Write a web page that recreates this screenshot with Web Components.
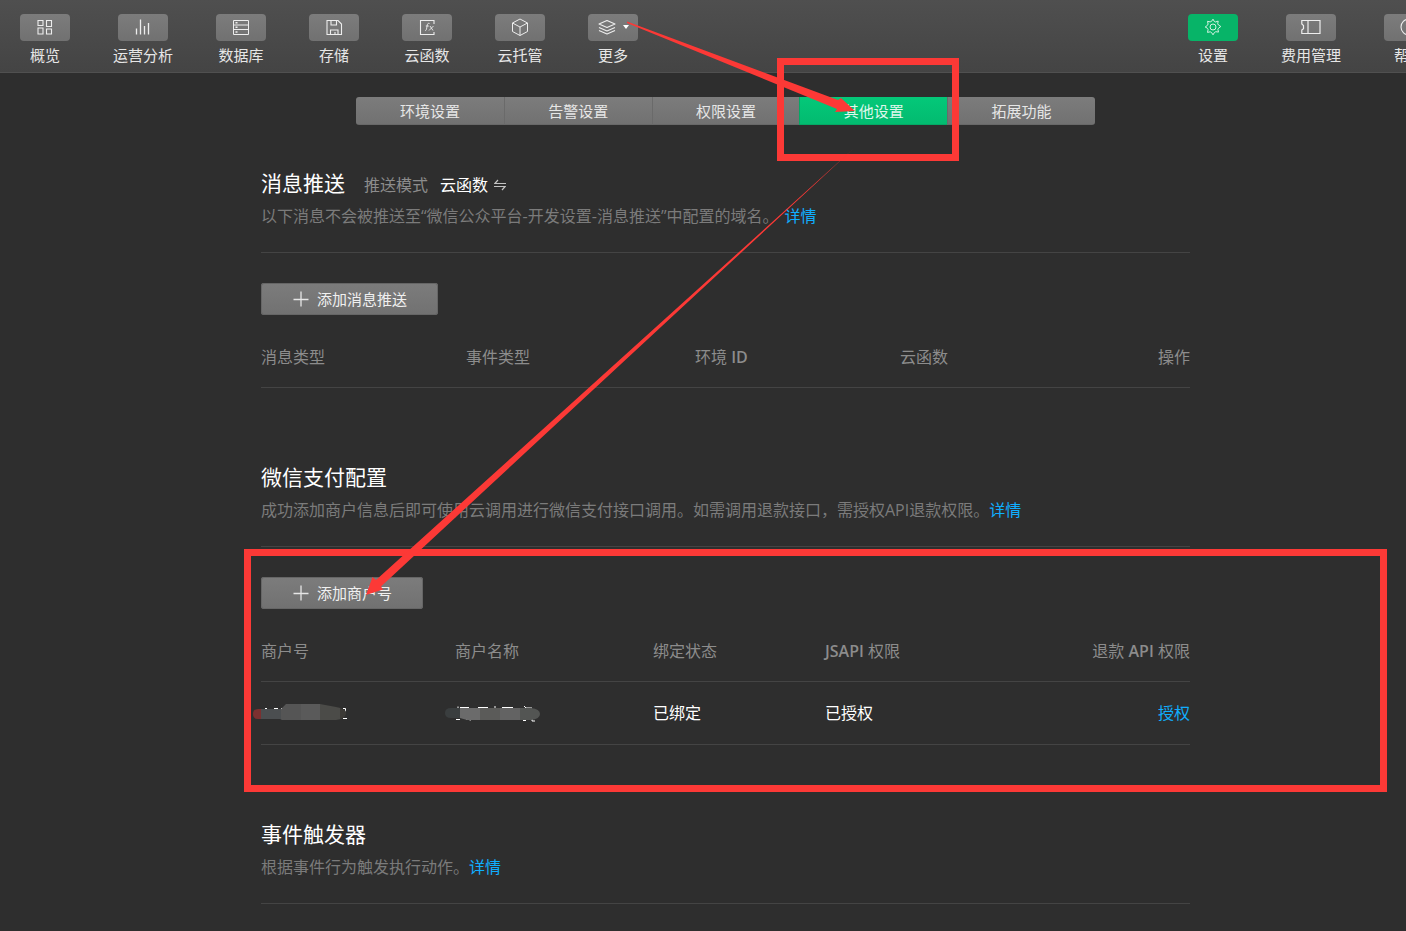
<!DOCTYPE html>
<html lang="zh-CN">
<head>
<meta charset="utf-8">
<title>云开发控制台</title>
<style>
  html, body { margin: 0; background: #2e2e2e; }
  body {
    min-height: 100vh;
    overflow: hidden;
    color: #fff;
    font-family: "Open Sans", "Noto Sans CJK SC", sans-serif;
    font-size: 16px;
    line-height: 24px;
  }
</style>
</head>
<body>
<cloud-console>
  <tool-bar slot="toolbar">
    <tool-item label="概览">
      <svg width="18" height="18" viewBox="0 0 18 18" fill="none" stroke="#ededed" stroke-width="1.1"><path d="M2 2.5h5v5H2zM10.500 2.500h5v6h-5zM2 10h5v6H2zM10.500 11h5v5h-5z"/></svg>
    </tool-item>
    <tool-item label="运营分析">
      <svg width="18" height="18" viewBox="0 0 18 18" fill="none" stroke="#ededed" stroke-width="1.3"><path d="M2.500 10.500v6M6.500 1.500v15M10.500 8v8.500M14.500 5v11.500"/></svg>
    </tool-item>
    <tool-item label="数据库">
      <svg width="18" height="18" viewBox="0 0 18 18" fill="none" stroke="#ededed"><path d="M1.500 2.500h15v14h-15z"/><path d="M1.500 7h15M1.500 11.500h15"/><path d="M3.500 4.700h2M3.500 9.300h2M3.500 14h2" stroke-width="1.4"/></svg>
    </tool-item>
    <tool-item label="存储">
      <svg width="18" height="18" viewBox="0 0 18 18" fill="none" stroke="#ededed" stroke-width="1.1"><path d="M2 2.500h11l3.500 3.500v10.500H2z"/><path d="M6 2.500v4.500h5.500V2.500M5.500 16.500v-4.500h7.500v4.500M10 14v2.500"/></svg>
    </tool-item>
    <tool-item label="云函数">
      <svg width="18" height="18" viewBox="0 0 18 18" fill="none" stroke="#ededed"><path d="M16 6V2.500H2.500v14H16V14" stroke-width="1.1"/><path d="M11.500 5.500c-1.500-.5-2 .3-2.200 1.500L8.500 11c-.2 1.200-.6 1.600-1.300 1.500M7.800 8h3M12 8l3 4.500M15.500 8l-4.500 4.500" stroke-width=".9"/></svg>
    </tool-item>
    <tool-item label="云托管">
      <svg width="18" height="18" viewBox="0 0 18 18" fill="none" stroke="#ededed" stroke-linejoin="round"><path d="M9 1l7.500 4v8.500L9 17.500l-7.500-4V5zM1.500 5L9 9l7.500-4M9 9v8.500"/></svg>
    </tool-item>
    <tool-item label="更多" menu>
      <svg width="18" height="18" viewBox="0 0 18 18" fill="none" stroke="#ededed" stroke-width="1.100" stroke-linejoin="round"><path d="M9 2.500l8 3.500-8 3.500L1 6zM1 9.500l8 3.500 8-3.500M1 12.500l8 3.500 8-3.500"/></svg>
    </tool-item>
    <tool-item slot="end" label="设置" active>
      <svg width="18" height="18" viewBox="0 0 18 18" fill="none" stroke="#d5f3e3" stroke-linejoin="round"><circle cx="9" cy="9" r="3"/><path d="M9 1.200l1.300 2.300 1.200.5 2.700-.9-.5 2.700.8 1.200 2.300 1.500-2.300 1.700-.6 1.200.6 2.700-2.700-.4-1.300.7L9 16.800l-1.500-2.300-1.300-.7-2.700.6.6-2.800-.6-1.300L1.200 9l2.300-1.700.6-1.300-.6-2.700 2.700.6 1.300-.5z"/></svg>
    </tool-item>
    <tool-item slot="end" label="费用管理">
      <svg width="20" height="18" viewBox="0 0 20 18" fill="none" stroke="#ededed" stroke-width="1.200"><path d="M.800 2.500h18.200v13H.800V12l1.700-1.200V7.500L.800 6zM7 2.500v13"/></svg>
    </tool-item>
    <tool-item slot="end" label="帮助">
      <svg width="18" height="18" viewBox="0 0 18 18" fill="none" stroke="#ededed" stroke-width="1.100"><circle cx="9" cy="9" r="8"/><path d="M6.500 7c0-3.200 5-3.200 5 0 0 2-2.500 1.800-2.500 4M9 12.500V14"/></svg>
    </tool-item>
  </tool-bar>

  <tab-strip slot="tabs" tabs="环境设置,告警设置,权限设置,其他设置,拓展功能" selected="3"></tab-strip>

  <config-section>
    <span slot="title">消息推送</span>
    <push-mode slot="extra"></push-mode>
    以下消息不会被推送至“微信公众平台-开发设置-消息推送”中配置的域名。<text-link gap>详情</text-link>
    <add-button slot="body">添加消息推送</add-button>
    <message-table slot="body"></message-table>
  </config-section>

  <config-section>
    <span slot="title">微信支付配置</span>
    成功添加商户信息后即可使用云调用进行微信支付接口调用。如需调用退款接口，需授权API退款权限。<text-link>详情</text-link>
    <add-button slot="body">添加商户号</add-button>
    <merchant-table slot="body"></merchant-table>
  </config-section>

  <config-section>
    <span slot="title">事件触发器</span>
    根据事件行为触发执行动作。<text-link>详情</text-link>
  </config-section>

  <guide-marks slot="marks"></guide-marks>
</cloud-console>

<script>
  const define = (name, render) => customElements.define(name, class extends HTMLElement {
    connectedCallback() {
      if (this.shadowRoot) return;
      this.attachShadow({ mode: 'open' }).innerHTML = render(this);
    }
  });

  const buttonReset = `
    button { box-sizing: border-box; margin: 0; padding: 0; border: 0; font: inherit; color: #e6e6e6; cursor: pointer;
             background: linear-gradient(#7c7c7c, #717171); }`;

  // The console is a little wider than the window, so its right edge runs out of view.
  define('cloud-console', () => `
    <style>
      :host { display: block; position: relative; width: calc(100% + 45px); }
      main { display: flex; flex-direction: column; gap: 76px; max-width: 929px; margin: 44px auto 0; padding-bottom: 27px; }
    </style>
    <slot name="toolbar"></slot>
    <slot name="tabs"></slot>
    <main><slot></slot></main>
    <slot name="marks"></slot>`);

  define('tool-bar', () => `
    <style>
      :host { display: block; }
      nav { display: flex; justify-content: space-between; box-sizing: border-box; height: 73px; padding: 14px 17px 0 20px;
            background: linear-gradient(#4f4f4f, #444); border-bottom: 1px solid #505050; }
      div { display: flex; gap: 43px; }
    </style>
    <nav aria-label="控制台">
      <div><slot></slot></div>
      <div><slot name="end"></slot></div>
    </nav>`);

  define('tool-item', el => `
    <style>
      :host { display: block; min-width: 50px; }
      ${buttonReset}
      button { display: flex; flex-direction: column; align-items: center; gap: 4px; width: 100%; background: none; }
      .key { display: flex; align-items: center; justify-content: center; gap: 7px; box-sizing: border-box; width: 50px; height: 27px;
             padding-bottom: 1px; border-radius: 4px; background: linear-gradient(#7c7c7c, #717171); }
      :host([active]) .key { background: #07b468; }
      .caret { width: 0; border: 3px solid transparent; border-top: 4px solid #fff; border-bottom: 0; }
      .label { font-size: 15px; line-height: 20px; white-space: nowrap; }
    </style>
    <button type="button">
      <span class="key"><slot></slot>${el.hasAttribute('menu') ? '<span class="caret"></span>' : ''}</span>
      <span class="label">${el.getAttribute('label')}</span>
    </button>`);

  define('tab-strip', el => `
    <style>
      :host { display: block; max-width: 739px; margin: 24px auto 0; }
      ${buttonReset}
      div { display: grid; grid-template-columns: repeat(5, 1fr); height: 28px; border-radius: 3px; overflow: hidden; }
      button { padding-top: 2px; font-size: 15px; line-height: 25px; border-bottom: 1px solid #686868; }
      button + button { border-left: 1px solid #6a6a6a; }
      button[aria-selected="true"] { background: linear-gradient(#04c879, #03bb70); border-color: #04a965; color: #dff7ec; }
    </style>
    <div role="tablist">${el.getAttribute('tabs').split(',').map((t, i) =>
      `<button type="button" role="tab" aria-selected="${i === +el.getAttribute('selected')}">${t}</button>`).join('')}</div>`);

  define('config-section', () => `
    <style>
      :host { display: block; }
      header { padding-bottom: 24px; border-bottom: 1px solid #444; }
      .top { display: flex; align-items: center; gap: 19px; margin-bottom: 7px; }
      h2 { margin: 0; font-size: 21px; line-height: 28px; font-weight: 400; }
      p { margin: 0; color: #7b7b7b; }
      .body { display: block; margin-bottom: -1px; }
    </style>
    <section>
      <header>
        <div class="top"><h2><slot name="title"></slot></h2><slot name="extra"></slot></div>
        <p><slot></slot></p>
      </header>
      <slot name="body" class="body"></slot>
    </section>`);

  define('push-mode', () => `
    <style>
      :host { display: block; padding-top: 4px; color: #8c8c8c; }
      ${buttonReset}
      div { display: flex; align-items: center; gap: 12px; }
      button { display: flex; align-items: center; gap: 6px; background: none; color: #fff; }
    </style>
    <div>
      <span>推送模式</span>
      <button type="button" aria-label="切换推送模式">云函数
        <svg width="12" height="12" viewBox="0 0 12 12" fill="none" stroke="#c4c4c4" stroke-width="1.200"><path d="M4 1L.800 4.500H12M0 7.500h11.200L8 11"/></svg>
      </button>
    </div>`);

  // Kept on one line: white space beside the anchor would show as a gap in running text.
  define('text-link', () =>
    '<style>:host { display: inline; } :host([gap]) { margin-left: 6px; } a { color: #10aeff; text-decoration: none; }</style><a href="#"><slot></slot></a>');

  define('add-button', () => `
    <style>
      :host { display: block; margin-top: 30px; }
      ${buttonReset}
      button { display: flex; align-items: center; gap: 8px; height: 32px; padding: 0 31px 0 32px; border-radius: 3px;
               font-size: 15px; box-shadow: inset 0 0 0 1px #666; color: #f0f0f0; }
    </style>
    <button type="button">
      <svg width="16" height="16" viewBox="0 0 16 16" stroke="#e6e6e6" stroke-width="1.300"><path d="M.500 8.500h15M8 .500v15"/></svg>
      <span><slot></slot></span>
    </button>`);

  const tableStyle = `
    :host { display: block; margin-top: 12px; }
    table { width: 100%; table-layout: fixed; border-collapse: separate; border-spacing: 0; }
    th, td { padding: 0; text-align: left; white-space: nowrap; border-bottom: 1px solid #444; }
    th { height: 60px; color: #8c8c8c; font-weight: 400; }
    td { height: 62px; color: #fff; }
    th:last-child, td:last-child { text-align: right; }
    b { font-weight: 600; }
    svg { display: block; overflow: visible; }`;

  define('message-table', () => `
    <style>${tableStyle}</style>
    <table>
      <colgroup><col width="205"><col width="229"><col width="205"><col></colgroup>
      <thead><tr><th>消息类型</th><th>事件类型</th><th>环境 <b>ID</b></th><th>云函数</th><th>操作</th></tr></thead>
    </table>`);

  define('merchant-table', () => `
    <style>${tableStyle}</style>
    <table>
      <colgroup><col width="194"><col width="198"><col width="172"><col></colgroup>
      <thead><tr><th>商户号</th><th>商户名称</th><th>绑定状态</th><th><b>JSAPI</b> 权限</th><th>退款 <b>API</b> 权限</th></tr></thead>
      <tbody><tr>
        <td>
          <svg width="86" height="18" viewBox="0 0 86 18" role="img" aria-label="已隐藏">
            <path d="M4 4.500h2M13 4.500h4M20 4.500h4M82 4.500h2.500v2l-1 1.500M82 14.500h4" stroke="#fff" fill="none"/>
            <clipPath id="a"><path d="M-3 5H20L25 0H59L75 3Q86 5 85 10T75 16H21L19 15H-3Q-8 15-8 10T-3 5"/></clipPath>
            <g clip-path="url(#a)">
              <path fill="#7b3030" d="M-8 0h8v16h-8z"/><path fill="#4b4e50" d="M0 0h20v16H0z"/><path fill="#555" d="M20 0h20v16H20z"/>
              <path fill="#5a5a5a" d="M40 0h19v16H40z"/><path fill="#4b4b48" d="M59 0h20v16H59z"/><path fill="#3c3a36" d="M79 0h8v16h-8z"/>
            </g>
          </svg>
        </td>
        <td>
          <svg width="86" height="16" viewBox="0 0 86 16" role="img" aria-label="已隐藏">
            <path d="M3 1.500v3M5 2.500h9M6 4.500h7M1 14.500h4M11 14l5 1M23 2.500h10M40 1v3M47 2.500h11M69 1l2 2h6M68 15.500h3M77 14v2h3" stroke="#fff" fill="none"/>
            <clipPath id="b"><path d="M-4 3H76Q85 4 85 9T76 15H12L5 13H-4Q-10 13-10 8T-4 3"/></clipPath>
            <g clip-path="url(#b)">
              <path fill="#3a3e3f" d="M-10 0H5v16h-15z"/><path fill="#6b6b6b" d="M5 0h20v16H5z"/><path fill="#5b5b59" d="M25 0h20v16H25z"/>
              <path fill="#636363" d="M45 0h20v16H45z"/><path fill="#535553" d="M65 0h21v16H65z"/>
            </g>
          </svg>
        </td>
        <td>已绑定</td><td>已授权</td><td><text-link>授权</text-link></td>
      </tr></tbody>
    </table>`);

  // Red marks laid over the page: two frames and two tapered arrows.
  define('guide-marks', () => `
    <style>
      :host { display: block; position: absolute; inset: 0; pointer-events: none; }
      svg { display: block; width: 100%; height: 100%; overflow: visible; }
    </style>
    <svg aria-hidden="true" fill="#fc3936">
      <g fill="none" stroke="#fc3936" stroke-width="7">
        <rect x="780.500" y="61.500" width="175" height="96"/>
        <rect x="247.500" y="552.500" width="1136" height="236"/>
      </g>
      <path d="M627 21.500L838 100l3-2 14 13-20 1 2-3L627 23z"/>
      <path d="M853 149L376 580l-3.500-3L366 595l17-5.500-2-3z"/>
    </svg>`);
</script>
</body>
</html>
